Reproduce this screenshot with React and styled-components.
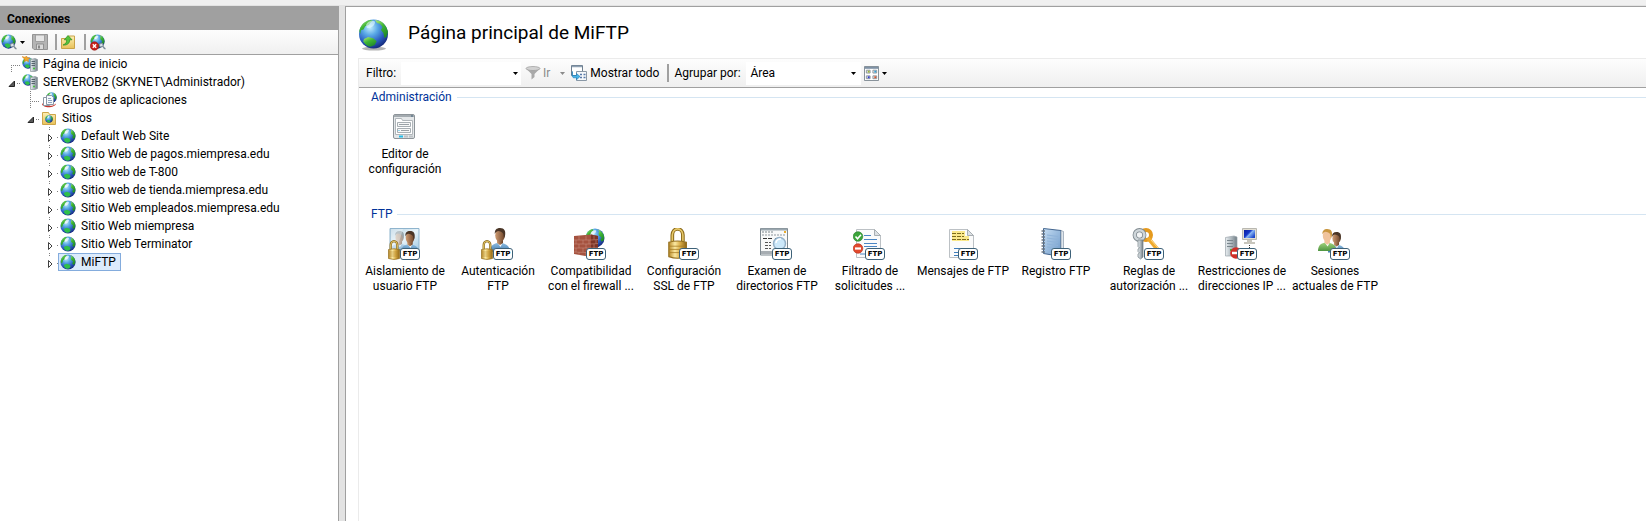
import React, { useState } from 'react';
import styled, { createGlobalStyle, css } from 'styled-components';

const GlobalStyle = createGlobalStyle`
  *, *::before, *::after { box-sizing: border-box; }
  html, body, #root { height: 100%; }
  body {
    margin: 0;
    background: #f0f0f0;
    color: #000;
    font: 12px/15px Roboto, 'Noto Sans', sans-serif;
  }
  button, input, select { font: inherit; color: inherit; }
  svg { display: block; flex: none; }
`;

/* ---------- layout ---------- */

const Window = styled.div`
  display: flex;
  min-height: 100vh;
  padding-top: 6px;
  background: linear-gradient(#f0f0f0 5px, #e3e3e3 5px);
`;

const Sidebar = styled.aside`
  flex: 0 0 339px;
  display: flex;
  flex-direction: column;
  background: #fff;
  border-right: 1px solid #a0a0a0;
`;

const SidebarTitle = styled.h2`
  margin: 0;
  height: 24px;
  padding: 0 7px;
  background: #a0a0a0;
  font-size: 12px;
  line-height: 26px;
  font-weight: 700;
`;

const SidebarToolbar = styled.div`
  display: flex;
  align-items: center;
  height: 25px;
  padding-left: 1px;
  background: linear-gradient(#fdfdfd, #f0f0f0);
  border-bottom: 1px solid #a0a0a0;
`;

const IconButton = styled.button`
  display: flex;
  align-items: center;
  gap: ${p => p.$gap || 0}px;
  padding: 0;
  border: 0;
  background: none;
  color: ${p => (p.disabled ? '#8a8a8a' : 'inherit')};
  white-space: nowrap;
`;

const SaveButton = styled(IconButton)`
  margin-left: 7px;
`;

const SplitArrow = styled(IconButton)`
  margin: 0 6px 0 10px;
`;

const Separator = styled.span`
  width: 2px;
  height: ${p => p.$height || 16}px;
  margin: 0 ${p => p.$right}px 0 ${p => p.$left}px;
  background: #a0a0a0;
`;

const Tree = styled.ul`
  margin: 0;
  padding: 0;
  list-style: none;
`;

const Row = styled.li`
  display: flex;
  align-items: center;
  height: 18px;
  padding-left: ${p => p.$level * 19}px;
  white-space: nowrap;
`;

const Expander = styled.button`
  width: 20px;
  height: 18px;
  padding: 0;
  border: 0;
  background: none;
`;

const Node = styled.button`
  display: flex;
  align-items: center;
  gap: 5px;
  height: 18px;
  padding: 0 4px 0 1px;
  border: 1px solid transparent;
  background: none;
  ${p => p.$selected && css`
    background: #dcebfc;
    border-color: #84acdd;
  `}
`;

const Main = styled.main`
  flex: 1;
  min-width: 0;
  display: flex;
  flex-direction: column;
  margin-left: 6px;
  padding: 12px 0 0 12px;
  background: #fff;
  border: solid #a0a0a0;
  border-width: 1px 0 0 1px;
`;

const PageHeader = styled.header`
  display: flex;
  align-items: flex-start;
  gap: 18px;
  height: 39px;
`;

const PageTitle = styled.h1`
  margin: 0;
  font-size: 19px;
  line-height: 28px;
  font-weight: 400;
`;

const Content = styled.section`
  flex: 1;
  border: solid #ebebeb;
  border-width: 1px 0 0 1px;
`;

const FilterBar = styled.div`
  display: flex;
  align-items: center;
  height: 29px;
  padding-left: 7px;
  background: linear-gradient(#fdfdfd, #efefef);
  border-bottom: 1px solid #a0a0a0;
  white-space: nowrap;
`;

const FieldLabel = styled.label`
  width: ${p => p.$width}px;
`;

const Combo = styled.div`
  display: flex;
  align-items: center;
  width: ${p => p.$width}px;
  height: 23px;
  margin-right: ${p => p.$gap}px;
  background: #fff;
`;

const ComboInput = styled.input`
  flex: 1;
  min-width: 0;
  height: 23px;
  padding: 0 4px;
  border: 0;
  background: none;
`;

const ComboSelect = styled.select`
  width: 100%;
  height: 23px;
  margin-right: -10px;
  padding: 0 4px;
  border: 0;
  background: none;
  appearance: none;
`;

const ComboArrow = styled.span`
  padding-right: 5px;
  pointer-events: none;
`;

const DropButton = styled.button`
  display: flex;
  padding: 0 3px;
  border: 0;
  background: none;
`;

const Group = styled.section`
  padding-bottom: ${p => p.$space || 0}px;
`;

const GroupTitle = styled.h2`
  display: flex;
  align-items: center;
  gap: 5px;
  margin: 0;
  padding-left: 12px;
  height: 19px;
  color: #003399;
  font-size: 12px;
  font-weight: 400;

  &::after {
    content: '';
    flex: 1;
    height: 1px;
    background: #d5e5f2;
  }
`;

const Features = styled.div`
  display: flex;
  flex-wrap: wrap;
  padding-top: 4px;
`;

const Feature = styled.button`
  display: flex;
  flex-direction: column;
  align-items: center;
  gap: 4px;
  width: 93px;
  padding: 0 1px 0 0;
  border: 0;
  background: none;
  text-align: center;
  white-space: pre;
`;

const FeatureIcon = styled.span`
  position: relative;
  width: 32px;
  height: 32px;
  margin-right: 2px;
`;

const Badge = styled.span`
  position: absolute;
  right: 0;
  bottom: 0;
  width: 20px;
  height: 12px;
  border: 1px solid #3d6178;
  border-radius: 3px;
  background: #fff;
  font: 700 7px/10px 'DejaVu Sans', sans-serif;
`;

/* ---------- icons ---------- */

const Gradients = styled.svg`
  position: absolute;
  width: 0;
  height: 0;
`;

function Defs() {
  return (
    <Gradients aria-hidden="true">
      <defs>
        <radialGradient id="ocean" cx=".38" cy=".28" r=".75">
          <stop offset="0" stopColor="#c4eefc" />
          <stop offset=".35" stopColor="#5aa9e6" />
          <stop offset=".7" stopColor="#2a5cc0" />
          <stop offset="1" stopColor="#15287a" />
        </radialGradient>
        <linearGradient id="land" x2=".6" y2="1">
          <stop offset="0" stopColor="#b5ec7c" />
          <stop offset=".5" stopColor="#3fb535" />
          <stop offset="1" stopColor="#1f8a2a" />
        </linearGradient>
        <linearGradient id="gold" x2="1">
          <stop offset="0" stopColor="#b98a28" />
          <stop offset=".35" stopColor="#fbe9a2" />
          <stop offset=".65" stopColor="#d9ac45" />
          <stop offset="1" stopColor="#8f6516" />
        </linearGradient>
        <linearGradient id="steel" x2="1">
          <stop offset="0" stopColor="#e9eef1" />
          <stop offset=".5" stopColor="#aeb8be" />
          <stop offset="1" stopColor="#707d85" />
        </linearGradient>
        <linearGradient id="folder" y2="1" x2="0">
          <stop offset="0" stopColor="#fdf0b5" />
          <stop offset="1" stopColor="#e8c158" />
        </linearGradient>
        <linearGradient id="shirt" y2="1" x2="0">
          <stop offset="0" stopColor="#8fbde0" />
          <stop offset="1" stopColor="#3d78ae" />
        </linearGradient>
        <linearGradient id="greenShirt" y2="1" x2="0">
          <stop offset="0" stopColor="#9fd17b" />
          <stop offset="1" stopColor="#4d9440" />
        </linearGradient>
        <linearGradient id="skin" x2="1">
          <stop offset="0" stopColor="#cf9c72" />
          <stop offset="1" stopColor="#6b4228" />
        </linearGradient>
        <linearGradient id="screen" x2="1" y2=".7">
          <stop offset="0" stopColor="#0b1f9e" />
          <stop offset=".45" stopColor="#1436c8" />
          <stop offset=".6" stopColor="#86b4f4" />
          <stop offset="1" stopColor="#1b46cc" />
        </linearGradient>
        <linearGradient id="book" x2="1" y2="1">
          <stop offset="0" stopColor="#c4dcf2" />
          <stop offset="1" stopColor="#6b97c8" />
        </linearGradient>
        <linearGradient id="frost" x2="1" y2="1">
          <stop offset="0" stopColor="#b3cfdf" />
          <stop offset=".5" stopColor="#e8f4fa" />
          <stop offset="1" stopColor="#a5cbe4" />
        </linearGradient>
      </defs>
    </Gradients>
  );
}

const Svg = ({ w = 16, h = w, box, children }) => (
  <svg width={w} height={h} viewBox={box || `0 0 ${w} ${h}`} aria-hidden="true">{children}</svg>
);

/* Globe drawn on a 16 unit square; nested into the larger icons. */
const Earth = ({ x = 0, y = 0, s = 16 }) => (
  <svg x={x} y={y} width={s} height={s} viewBox="0 0 16 16">
    <circle cx="8" cy="8" r="7.6" fill="url(#ocean)" />
    <path d="M.8 7C1 3.900 3.200 1.500 6 .8l.8 1-1.500 1.400L4.800 5 3 6.200l-.4 2L1.300 9.500Z" fill="url(#land)" />
    <path d="M9.800.9c2.800.8 5 3 5.500 5.900l-.2 3-1.700 1.100-1.200-1.700 1-1.600-2-1.700-.4-2 .6-1.300Z" fill="url(#land)" />
    <path d="M4.300 10.700l2.500-.9 2.800 1 1 1.700-1.500 1.900-2.500.4c-1.400-.6-2.200-1.800-2.700-3Z" fill="#2fc04a" />
    <path d="M4.600 3.800C5.600 2 7.700 1.300 9 2.200 8.600 4.200 6.500 6 4.300 5.600Z" fill="#fff" opacity=".7" />
  </svg>
);

const GlobeIcon = ({ size = 16 }) => <Svg w={size} box="0 0 16 16"><Earth /></Svg>;

const PageGlobe = () => (
  <Svg w={32}>
    <ellipse cx="16" cy="29.6" rx="12" ry="2" fill="#777" opacity=".55" />
    <circle cx="15.5" cy="15" r="14.5" fill="url(#ocean)" />
    <path d="M1.300 12C2.200 6.400 6.500 2 12 .9l3 .9-2.500 1.800-1.600 2.400-3.700 1.200-1.700 3.400-2.500.6L2.200 15Z" fill="url(#land)" />
    <path d="M17 1l5 1c4 2 7 6 8 11l-1.600 5-2 1-1-5-2.400-3 1.500-3-2.500-3-3-1Z" fill="url(#land)" />
    <path d="M6 20l4.200-1.900 5 1.200 3.500 3-2 3.700-4.200 1.800C9.200 27.500 6.800 24.800 5.200 22.500Z" fill="url(#land)" />
    <path d="M8 6c2-4 6-5 9-3.500 0 4-3 6.500-8 6.500Z" fill="#e9fbff" opacity=".6" />
  </Svg>
);

const Plug = () => (
  <g fill="none" stroke="#7d8d98">
    <path d="M9 10.500l3-1.500 1.500 2.500-3 1.800Z" fill="#d7e0e6" />
    <path d="M12.800 12.500c1.200.3.600 2 2.700 2.300" strokeWidth="1.500" />
  </g>
);

const ConnectIcon = () => <Svg w={17}><Earth x={0} y={0} s={15} /><Plug /></Svg>;

const DisconnectIcon = () => (
  <Svg w={17}>
    <Earth x={0} s={15} />
    <Plug />
    <circle cx="4.500" cy="12" r="4.200" fill="#c8201c" stroke="#8f120f" strokeWidth=".6" />
    <path d="M2.800 10.300l3.400 3.400M6.200 10.300l-3.400 3.400" stroke="#fff" strokeWidth="1.400" />
  </Svg>
);

const SaveIcon = () => (
  <Svg w={16}>
    <path d="M.5.500h15v15H2L.500 14Z" fill="#b4b4b4" stroke="#949494" />
    <path d="M3.500 1h9v6.500h-9Z" fill="#e6e6e6" stroke="#a0a0a0" />
    <path d="M4.500 10h7v5.500h-7Z" fill="#d9d9d9" stroke="#909090" />
    <path d="M6 11.500h2v3H6Z" fill="#888" />
  </Svg>
);

const UpFolderIcon = () => (
  <Svg w={16}>
    <path d="M1.500 4.500h6l1-2.500h6v12.500h-13Z" fill="url(#folder)" stroke="#c9a349" />
    <path d="M3 11c3-1 3.800-3 3.600-5.200H4.300L8 1.500l4 4.300H9.600C9.800 9 7.500 11.500 3 11Z" fill="#56c43c" stroke="#2b8a22" strokeWidth=".7" />
  </Svg>
);

const Tower = ({ x = 8, y = 2 }) => (
  <svg x={x} y={y} width="8" height="14" viewBox="0 0 8 14">
    <path d="M.5 1.500L5 .5l2.500 1v11L5 13.500H.500Z" fill="url(#steel)" stroke="#8c979e" strokeWidth=".7" />
    <path d="M1.500 3.500H5M1.500 5.500H5M1.500 7.500H5" stroke="#56646d" />
    <path d="M3 10.500h2" stroke="#46c23a" strokeWidth="1.500" />
  </svg>
);

const StartPageIcon = () => (
  <Svg w={16}>
    <Earth x={0} y={1} s={12} />
    <Tower />
    <path d="M0 .5l3 .8L4.500 0l1 1.700L8 2 6.200 3.500l.4 2.200-2-1L2.300 5.500l.3-2.300Z" fill="#f2a72c" stroke="#cf7d14" strokeWidth=".5" />
  </Svg>
);

const ServerIcon = () => <Svg w={16}><Earth y={0} s={12} /><Tower /></Svg>;

const PoolsIcon = () => (
  <Svg w={16}>
    <Earth x={5} s={11} />
    <path d="M1 11.500c0 5 13 5 14 0l-2 1.500c-3 1.500-8 1-10-1Z" fill="#c9352c" />
    <path d="M2.500 5.500h6v8h-6Z" fill="#fff" stroke="#8b98a5" />
    <path d="M5.500 3.500h5l2 2v7h-7Z" fill="#f4f8fc" stroke="#8b98a5" />
    <path d="M7 6.500h3M7 8.500h4M7 10.500h4" stroke="#8fa6bd" />
  </Svg>
);

const SitesIcon = () => (
  <Svg w={16}>
    <path d="M1.500 2.500h6l1 2h6v10h-13Z" fill="url(#folder)" stroke="#cda64a" />
    <Earth x={4} y={5} s={8} />
  </Svg>
);

const Arrow = ({ color = '#000' }) => (
  <Svg w={5} h={3}><path d="M0 0h5L2.500 3Z" fill={color} /></Svg>
);

const FunnelIcon = () => (
  <Svg w={16}>
    <path d="M1 3.500L6.500 9v5.500L9.500 12V9L15 3.500Z" fill="#a9a9a9" />
    <ellipse cx="8" cy="3.500" rx="7" ry="2" fill="#d2d2d2" stroke="#9b9b9b" strokeWidth=".7" />
  </Svg>
);

const ShowAllIcon = () => (
  <Svg w={16}>
    <path d="M.5.500h11v10H.500Z" fill="#fff" stroke="#6e7f90" />
    <path d="M1 1.500h10" stroke="#8fa1b3" strokeWidth="1.500" />
    <path d="M5.500 6.500h10v9h-10Z" fill="#f5f8fb" stroke="#8a98a6" />
    <path d="M9 9.500h2M12.500 9.500h2M9 12.500h2M12.500 12.500h2" stroke="#5878a8" strokeWidth="1.500" />
    <path d="M1.500 6.500v4h4V8.500L9 11.500l-3.500 3.300v-2H3c-1.500 0-2.500-2-1.500-6.300Z" fill="#48b4e8" stroke="#1c78b4" strokeWidth=".6" />
  </Svg>
);

const ViewIcon = () => (
  <Svg w={15} box="0 0 16 16">
    <path d="M.5.500h15v15H.500Z" fill="#fff" stroke="#7d8791" />
    <path d="M1 2h14" stroke="#7f92a6" strokeWidth="2" />
    <g fill="#eee" stroke="#8a939b">
      <path d="M2.500 4.500h4v3h-4ZM9.500 4.500h4v3h-4ZM2.500 10.500h4v3h-4ZM9.500 10.500h4v3h-4Z" />
    </g>
    <path d="M4 6h2" stroke="#9bb53c" strokeWidth="2" />
    <path d="M11 6h2" stroke="#35a1d6" strokeWidth="2" />
    <path d="M4 12h2" stroke="#333ed0" strokeWidth="2" />
    <path d="M11 12h2" stroke="#d6552c" strokeWidth="2" />
  </Svg>
);

const EditorIcon = () => (
  <Svg w={32} box="0 1 32 32">
    <rect x="5.500" y="4.500" width="21" height="24" rx="1.500" fill="#e4e7e9" stroke="#8d9499" />
    <path d="M6 6h20" stroke="#a4abb0" strokeWidth="2" />
    <path d="M23 6h2" stroke="#43627a" />
    <path d="M7.500 24.500v-16h6l1 2h10v14Z" fill="#fff" stroke="#b0b6ba" />
    <path d="M9.500 12.500h13v4h-13ZM9.500 18.500h13v4h-13Z" fill="#f7f8f8" stroke="#a7aeb3" />
    <path d="M11 14.500h10M13 20.500h8" stroke="#9aa1a6" />
    <path d="M10.500 20.500h1" stroke="#2fb5e6" />
    <path d="M11 26.500h4" stroke="#25bce8" strokeWidth="2" />
    <path d="M16 26.500h4M21 26.500h4" stroke="#bcc2c6" strokeWidth="2" />
  </Svg>
);

const Padlock = ({ x = 0, y = 12, s = 1 }) => (
  <g transform={`translate(${x} ${y}) scale(${s})`}>
    <path d="M2.700 9V5a3.300 3.800 0 0 1 6.600 0v4" fill="none" stroke="#8a6a1c" strokeWidth="2.300" />
    <path d="M2.700 9V5a3.300 3.800 0 0 1 6.600 0v4" fill="none" stroke="#e6c768" strokeWidth="1" />
    <path d="M.5 9.500Q6 8 11.500 9.500v9Q6 20.500.500 18.500Z" fill="url(#gold)" stroke="#94701f" strokeWidth=".7" />
    <path d="M1 12h10M1 14h10M1 16h10" stroke="#a87d24" strokeWidth=".5" />
  </g>
);

const Person = ({ x = 0, y = 0, s = 1, skin = 'url(#skin)', hair = '#4a3526', shirt = 'url(#shirt)' }) => (
  <g transform={`translate(${x} ${y}) scale(${s})`}>
    <path d="M0 24c0-5 2-8 7-9h5c5 1 8 4 8 9Z" fill={shirt} />
    <path d="M7 14h6l-2.500 5Z" fill="#fff" />
    <path d="M7 11h6v4l-3 2-3-2Z" fill={skin} />
    <ellipse cx="10" cy="7.500" rx="4.800" ry="6.200" fill={skin} />
    <path d="M4.800 6C4.500 2 6.500 0 10 0c4.500 0 6 3 5 8l-1 2-.6-4C12.500 4 10 3 8 3 7 3.500 5.500 4 4.800 6Z" fill={hair} />
  </g>
);

const IsolationIcon = () => (
  <Svg w={32}>
    <path d="M2 .5h29v21H2Z" fill="url(#frost)" stroke="#8fb4cd" />
    <Person x={13} y={3} s={0.9} />
    <g opacity=".5"><Person x={3} y={3} s={0.85} hair="#5c6668" /></g>
    <path d="M3 1h12L9 21H3Z" fill="#fff" opacity=".35" />
    <Padlock x={0} y={12} />
  </Svg>
);

const AuthIcon = () => (
  <Svg w={32}><Person x={9} y={0} /><Padlock x={0} y={12} /></Svg>
);

const FirewallIcon = () => (
  <Svg w={32}>
    <Earth x={11} y={0} s={20} />
    <path d="M0 8l17-1.500 7 1.500v19L17 29 0 26Z" fill="#a5523f" />
    <path d="M17 6.500L24 8v19l-7 2Z" fill="#7c3427" />
    <path d="M0 12h17l7-.5M0 16h17l7-.5M0 20h17l7-.3M0 24l17 .8 7-1M5 8v4M12 7.500V12M2 12v4M9 12v4M15 12v4M5 16v4M12 16v4M2 20v4M9 20v4M15 20v5M5 24v3M12 24v4M20 7.500v4M22 12v3.500M20 16v4M22 20v4" fill="none" stroke="#cf9684" strokeWidth=".5" />
  </Svg>
);

const SslIcon = () => <Svg w={32}><Padlock x={1} y={-1} s={1.6} /></Svg>;

const BrowseIcon = () => (
  <Svg w={32}>
    <path d="M.5 27V.500h27V27Z" fill="#f8f9f9" stroke="#7e8990" />
    <path d="M1 1.500h26" stroke="#9aa7af" strokeWidth="2" />
    <path d="M2 4h11" stroke="#7b858c" strokeDasharray="2 1" />
    <path d="M2 7h24" stroke="#c3c8cc" strokeWidth="2" strokeDasharray="2 1" />
    <path d="M24 4h2" stroke="#e8ab2c" strokeWidth="2" />
    <path d="M3 10.500h9M15 10.500h4" stroke="#333" strokeDasharray="4 1" />
    <path d="M5 14.500h6M5 17.500h6M5 20.500h6" stroke="#555" strokeDasharray="3 1" />
    <path d="M1 23h11v3H1Z" fill="#a7adb2" />
    <circle cx="19.500" cy="15.500" r="6" fill="#cce8fa" stroke="#95b1c8" strokeWidth="1.500" />
    <path d="M16 15c0-3 3-4.500 5-4" stroke="#fff" strokeWidth="1.500" fill="none" />
  </Svg>
);

const Page = ({ x = 0 }) => (
  <g transform={`translate(${x} 0)`}>
    <path d="M.5 1.500h18l6 6v22H.500Z" fill="#fbfbfb" stroke="#bcc1c5" />
    <path d="M18.500 1.500v6h6Z" fill="#dde1e4" stroke="#a8aeb2" />
  </g>
);

const FilterIcon = () => (
  <Svg w={32}>
    <Page x={3} />
    <path d="M11 7.500h7M11 11.500h13M11 15.500h13M11 18.500h13M7 26h6" stroke="#4b86c4" />
    <circle cx="5" cy="8.500" r="4.800" fill="#3ca53b" stroke="#237a28" strokeWidth=".6" />
    <path d="M2.500 8.500l2 2.200 3.500-4" fill="none" stroke="#fff" strokeWidth="1.600" />
    <circle cx="5" cy="20.500" r="4.800" fill="#e2492d" stroke="#b02f1b" strokeWidth=".6" />
    <path d="M2 20.500h6" stroke="#fff" strokeWidth="2.200" />
  </Svg>
);

const MessagesIcon = () => (
  <Svg w={32}>
    <Page x={3} />
    <path d="M6 3h13v10H6Z" fill="#fbe98c" />
    <path d="M6 8h17v5H6Z" fill="#fbe98c" />
    <path d="M6 5.500h12M6 8.500h12M6 11.500h17" stroke="#7d6b1d" strokeDasharray="4 1" />
    <path d="M8 20.500h14M8 24.500h5M8 27.500h5" stroke="#3d7cba" />
  </Svg>
);

const LogIcon = () => (
  <Svg w={32}>
    <path d="M4.500.500L22 2.500v26l-17.500-3Z" fill="url(#book)" stroke="#44668f" />
    <path d="M22 2.500l2.500 1v24L22 28.500Z" fill="#dfe6ec" stroke="#7b8c9d" strokeWidth=".6" />
    <path d="M8 7l11 1.500M8 10l11 1.500M8 13l11 1.500M8 16l11 1.500M8 19l8 1" stroke="#8fb3d9" />
    <path d="M2.500 3H6M2.500 6H6M2.500 9H6M2.500 12H6M2.500 15H6M2.500 18H6M2.500 21H6M2.500 24H6" stroke="#6a7683" strokeWidth="1.500" />
  </Svg>
);

const KeysIcon = () => (
  <Svg w={32}>
    <circle cx="14" cy="7" r="5" fill="none" stroke="#e59a1e" strokeWidth="4" />
    <path d="M16 10l10 12" stroke="#f0aa2c" strokeWidth="4" />
    <path d="M19 12l7 8" stroke="#fbdc8f" />
    <circle cx="7.500" cy="7" r="4.800" fill="#f2f4f5" stroke="#7e888e" strokeWidth="4.200" />
    <circle cx="7.500" cy="7" r="4.800" fill="none" stroke="#cfd6da" strokeWidth="2.600" />
    <path d="M6 12h5v17l-2.500 2L6 29v-3l1.500-1L6 23.500V21l1.500-1L6 18.500Z" fill="url(#steel)" stroke="#737e85" strokeWidth=".7" />
  </Svg>
);

const IpIcon = () => (
  <Svg w={32}>
    <path d="M.5 9.500L9 8l3 1v18l-3 1H.500Z" fill="url(#steel)" stroke="#9aa4aa" strokeWidth=".7" />
    <path d="M2 12.500h6M2 15.500h6M2 18.500h6" stroke="#7a868d" />
    <path d="M5 22h3" stroke="#45ba3b" strokeWidth="2" />
    <path d="M17.500.500h14v11h-14Z" fill="#e2ded2" stroke="#b9b8b1" />
    <path d="M19 2h11v8H19Z" fill="url(#screen)" />
    <path d="M22 12h5v2h-5ZM19 14h11v2H19Z" fill="#c8c6bd" />
    <path d="M24.500 17v4" stroke="#333" strokeDasharray="1 1" />
    <circle cx="11" cy="25" r="5.800" fill="#d02f27" />
    <path d="M7 25h8" stroke="#fff" strokeWidth="2.500" />
  </Svg>
);

const SessionsIcon = () => (
  <Svg w={32}>
    <Person x={10} y={4} s={0.85} />
    <Person x={0} y={1} s={0.92} skin="#f0c39c" hair="#c9963f" shirt="url(#greenShirt)" />
  </Svg>
);

/* Dotted guide lines that tie a node to its parent. */
const Guides = ({ top, bottom, open, leaf }) => (
  <svg width="20" height="18" viewBox="0 0 20 18" aria-hidden="true">
    <g stroke="#808080" strokeDasharray="1 1">
      {top && <path d={leaf ? 'M11.500 0v10' : 'M11.500 0v4'} />}
      {bottom && <path d={leaf ? 'M11.500 10v8' : 'M11.500 16v2'} />}
      <path d={leaf ? 'M11 10.500h9' : 'M19 10.500h1'} />
      {open && <path d="M17 10.500h3" />}
    </g>
    {!leaf && (open
      ? <path d="M14.500 8v5.500H9Z" fill="#595959" stroke="#262626" />
      : <path d="M10.500 7.500v7l3.500-3.500Z" fill="#fff" stroke="#404040" />)}
  </svg>
);

/* ---------- data ---------- */

const TREE = [
  { label: 'Página de inicio', level: 0, Icon: StartPageIcon, leaf: true, bottom: true },
  { label: 'SERVEROB2 (SKYNET\\Administrador)', level: 0, Icon: ServerIcon, open: true },
  { label: 'Grupos de aplicaciones', level: 1, Icon: PoolsIcon, leaf: true, top: true, bottom: true },
  { label: 'Sitios', level: 1, Icon: SitesIcon, open: true },
  ...[
    'Default Web Site',
    'Sitio Web de pagos.miempresa.edu',
    'Sitio web de T-800',
    'Sitio web de tienda.miempresa.edu',
    'Sitio Web empleados.miempresa.edu',
    'Sitio Web miempresa',
    'Sitio Web Terminator',
    'MiFTP',
  ].map(label => ({ label, level: 2, Icon: GlobeIcon, top: true })),
];

const ADMIN = [['Editor de\nconfiguración', EditorIcon]];

const FTP = [
  ['Aislamiento de\nusuario FTP', IsolationIcon],
  ['Autenticación\nFTP', AuthIcon],
  ['Compatibilidad\ncon el firewall ...', FirewallIcon],
  ['Configuración\nSSL de FTP', SslIcon],
  ['Examen de\ndirectorios FTP', BrowseIcon],
  ['Filtrado de\nsolicitudes ...', FilterIcon],
  ['Mensajes de FTP', MessagesIcon],
  ['Registro FTP', LogIcon],
  ['Reglas de\nautorización ...', KeysIcon],
  ['Restricciones de\ndirecciones IP ...', IpIcon],
  ['Sesiones\nactuales de FTP', SessionsIcon],
];

function FeatureGroup({ title, items, badge, space }) {
  return (
    <Group $space={space}>
      <GroupTitle>{title}</GroupTitle>
      <Features>
        {items.map(([label, Icon]) => (
          <Feature key={label} type="button">
            <FeatureIcon>
              <Icon />
              {badge && <Badge>{badge}</Badge>}
            </FeatureIcon>
            {label}
          </Feature>
        ))}
      </Features>
    </Group>
  );
}

export default function App() {
  const [selected, setSelected] = useState('MiFTP');
  return (
    <Window>
      <GlobalStyle />
      <Defs />
      <Sidebar>
        <SidebarTitle>Conexiones</SidebarTitle>
        <SidebarToolbar>
          <IconButton type="button" $gap={2} aria-label="Conectar"><ConnectIcon /><Arrow /></IconButton>
          <SaveButton type="button" disabled aria-label="Guardar"><SaveIcon /></SaveButton>
          <Separator $left={7} $right={3} />
          <IconButton type="button" aria-label="Subir"><UpFolderIcon /></IconButton>
          <Separator $left={8} $right={4} />
          <IconButton type="button" aria-label="Desconectar"><DisconnectIcon /></IconButton>
        </SidebarToolbar>
        <Tree aria-label="Conexiones">
          {TREE.map(({ label, level, Icon, ...guides }) => (
            <Row key={label} $level={level}>
              {guides.leaf
                ? <Guides {...guides} />
                : <Expander type="button" aria-label={`Expandir ${label}`}><Guides {...guides} /></Expander>}
              <Node type="button" $selected={selected === label} onClick={() => setSelected(label)}>
                <Icon />{label}
              </Node>
            </Row>
          ))}
        </Tree>
      </Sidebar>
      <Main>
        <PageHeader>
          <PageGlobe />
          <PageTitle>Página principal de MiFTP</PageTitle>
        </PageHeader>
        <Content>
          <FilterBar>
            <FieldLabel htmlFor="filter" $width={35}>Filtro:</FieldLabel>
            <Combo $width={120} $gap={4}>
              <ComboInput id="filter" type="text" />
              <DropButton type="button" aria-label="Filtros recientes"><Arrow /></DropButton>
            </Combo>
            <IconButton type="button" disabled $gap={2}><FunnelIcon />Ir</IconButton>
            <SplitArrow type="button" disabled aria-label="Opciones de filtro"><Arrow color="#8a8a8a" /></SplitArrow>
            <IconButton type="button" $gap={3}><ShowAllIcon />Mostrar todo</IconButton>
            <Separator $height={18} $left={8} $right={5} />
            <FieldLabel htmlFor="group" $width={72}>Agrupar por:</FieldLabel>
            <Combo $width={115} $gap={3}>
              <ComboSelect id="group" defaultValue="Área">
                <option>Área</option>
                <option>Categoría</option>
                <option>Sin agrupar</option>
              </ComboSelect>
              <ComboArrow><Arrow /></ComboArrow>
            </Combo>
            <IconButton type="button" $gap={3} aria-label="Ver"><ViewIcon /><Arrow /></IconButton>
          </FilterBar>
          <FeatureGroup title="Administración" items={ADMIN} space={28} />
          <FeatureGroup title="FTP" items={FTP} badge="FTP" />
        </Content>
      </Main>
    </Window>
  );
}
